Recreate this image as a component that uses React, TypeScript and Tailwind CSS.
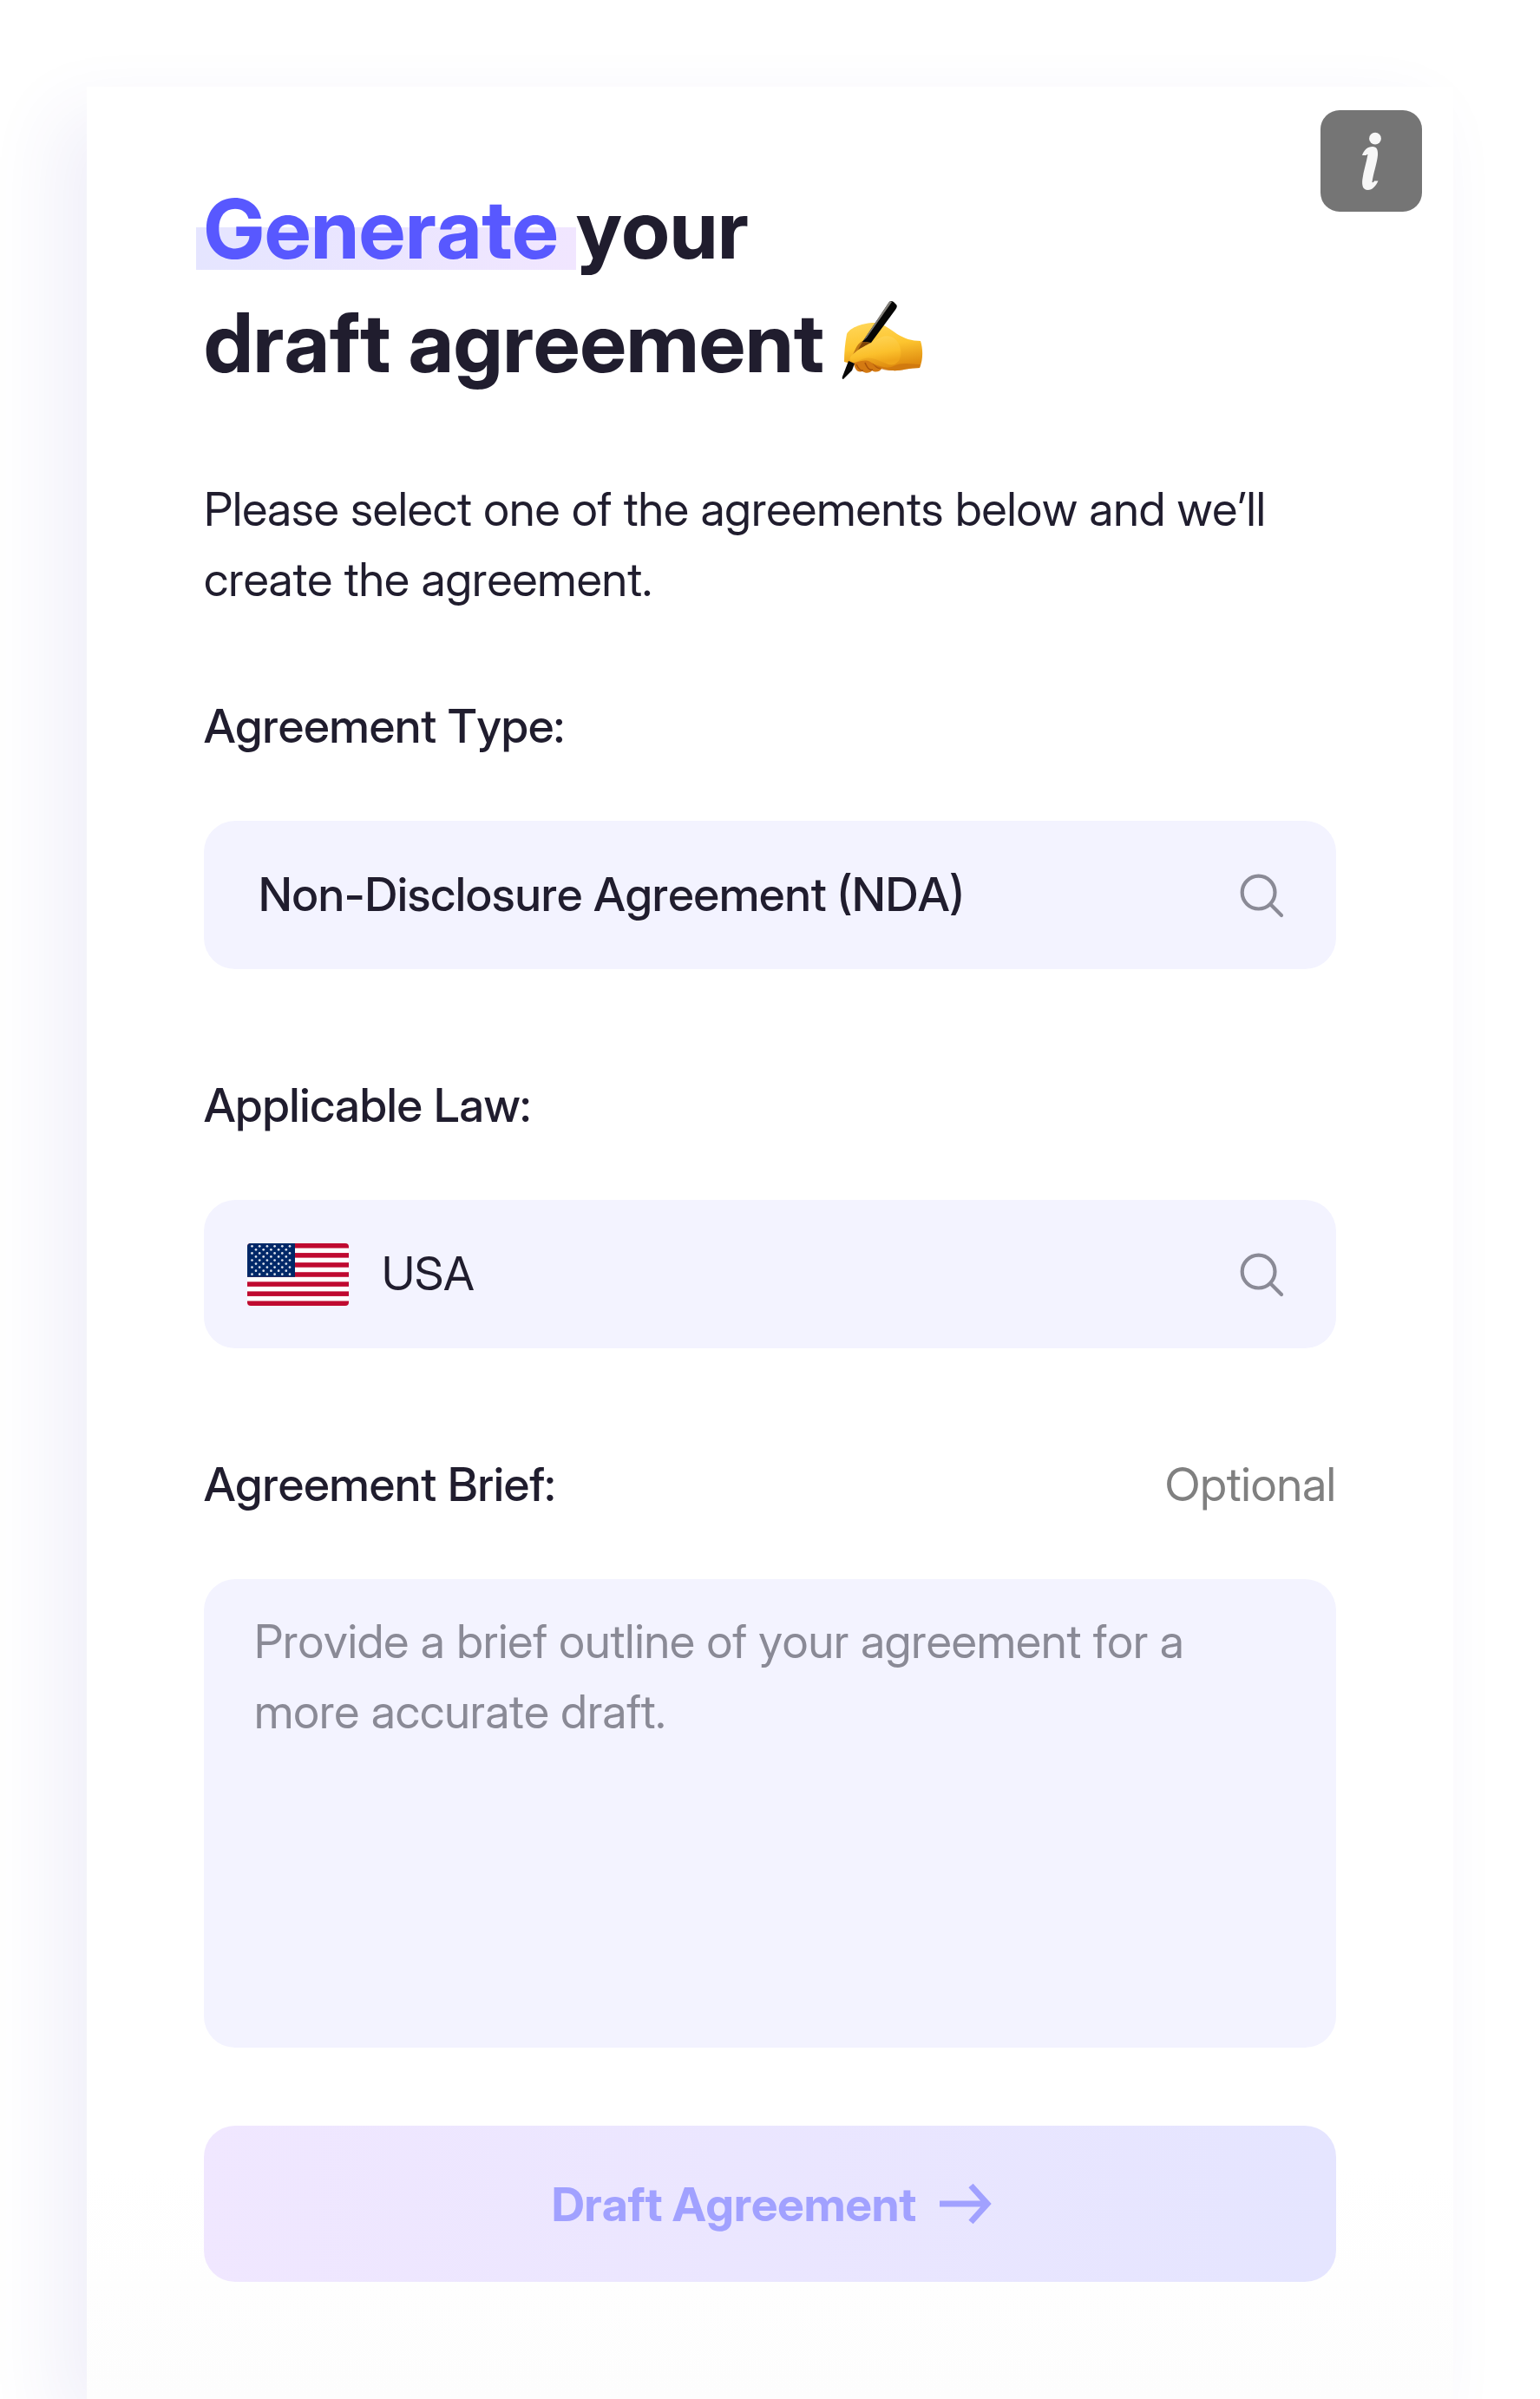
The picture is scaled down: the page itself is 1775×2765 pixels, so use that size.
import React from "react";

const STRIPES = [0, 2, 4, 6, 8, 10, 12];
const STAR_ROWS = [0, 1, 2, 3, 4, 5, 6, 7, 8];

function SearchIcon() {
  return (
    <svg viewBox="0 0 54 54" className="size-[54px] shrink-0" fill="none" stroke="#8a8a96" strokeWidth="4.2" aria-hidden="true">
      <circle cx="24.6" cy="23.6" r="18.9" />
      <path d="M38.3 37.3 L51 50" strokeLinecap="round" />
    </svg>
  );
}

function UsaFlag() {
  return (
    <svg viewBox="0 0 117 72" className="h-[72px] w-[117px] shrink-0 rounded-[4px]" aria-hidden="true">
      <rect width="117" height="72" fill="#fff" />
      {STRIPES.map((i) => (
        <rect key={i} x="0" y={(i * 72) / 13} width="117" height={72 / 13} fill="#bf0a30" />
      ))}
      <rect width="55" height="38.8" fill="#002868" />
      {STAR_ROWS.map((row) =>
        Array.from({ length: row % 2 ? 5 : 6 }, (_, col) => (
          <circle key={`${row}-${col}`} cx={(row % 2 ? 10 : 5.5) + col * 8.7} cy={3.3 + row * 4.05} r="1.35" fill="#dfe4ee" />
        ))
      )}
    </svg>
  );
}

function WritingHand() {
  return (
    <svg viewBox="0 0 94 91" className="inline-block h-[91px] w-[94px] align-[-8px]" role="img" aria-label="Writing hand">
      <defs>
        <linearGradient id="skin" x1="0" y1="0" x2="0.25" y2="1">
          <stop offset="0" stopColor="#ffd85c" />
          <stop offset="0.55" stopColor="#fdc52f" />
          <stop offset="1" stopColor="#e08d10" />
        </linearGradient>
        <linearGradient id="thumb" x1="0" y1="0" x2="0.3" y2="1">
          <stop offset="0" stopColor="#ffd95e" />
          <stop offset="0.7" stopColor="#fbc02c" />
          <stop offset="1" stopColor="#efa51a" />
        </linearGradient>
      </defs>
      <path d="M14 70 C14 80 19 84 24 82 C28 85 33 84 35 81 C39 84 45 82 46 79 L50 72 L30 58 Z" fill="#d47a12" />
      <path d="M17 74 Q21 82 25 81 M27 72 Q31 82 36 80 M35 70 Q40 80 46 78" stroke="#a9540a" strokeWidth="1.6" fill="none" />
      <path d="M3 71 C3 60 4 50 6 39 C10 31 26 26 37 26 C47 26 55 33 64 39 C72 44 81 47 91 47 C94 56 94 69 90 78 C77 78 67 82 58 81 C48 80 40 76 33 71 C26 67 18 72 10 73 Z" fill="url(#skin)" />
      <path d="M34 73 C46 76 51 80 60 76 C70 71 80 74 91 74 L90 78 C77 78 67 82 58 81 C50 81 44 80 34 73 Z" fill="#c9700f" opacity=".65" />
      <path d="M27 46 C18 48 16 57 12 65 L17 66 C21 61 27 57 30 52 Z" fill="#a65a0c" opacity=".7" />
      <path d="M10 66 C15 58 33 49 45 43 C56 38 66 45 68 57 C70 70 62 76 54 74 C43 70 36 65 27 67 C21 68 17 73 12 71 C10 70 9 68 10 66 Z" fill="url(#thumb)" />
      <path d="M55 2 Q57 0 60 2 L63 5 Q65 7 62 11 L34 49 L24 48 Z" fill="#060606" />
      <path d="M54 3 Q56 0 58 2 L29 43 L25 47 Z" fill="#85827c" />
      <path d="M24 48 L34 49 C28 52 22 55 19 57 Z" fill="#7c4308" />
      <path d="M8 70 L15 73 L12 81 L2 91 Q0 91 1 88 Z" fill="#080808" />
    </svg>
  );
}

function InfoGlyph() {
  return (
    <svg viewBox="0 0 117 117" className="size-full" fill="#f7f7f7" aria-hidden="true">
      <circle cx="63" cy="32.7" r="6.9" />
      <path d="M48 52 C50 46 54 42 60 42 C65 42 66.5 46 66 52 C65 62 61 72 59.5 83 Q61 84 62 81.5 H66.5 C64 87 60 92 54.5 92 C49 92 47.5 87 48.3 80 C49.5 70 53 60 54.5 51 Q53.5 50.5 52.5 52 Z" />
    </svg>
  );
}

export default function App() {
  const field = "flex h-[171px] items-center rounded-[36px] bg-[#f3f3ff] pr-[60px]";
  const input = "min-w-0 flex-1 bg-transparent pb-[2px] text-[54px] leading-[81px] outline-none";
  const label = "text-[54px] leading-[81px] font-medium";
  return (
    <div className="overflow-hidden bg-white px-[100px] pt-[100px] font-['Inter_Display','Inter',sans-serif] text-[#201d2e] [font-kerning:none]">
      <main className="relative bg-gradient-to-b from-white from-90% to-[#fdfdfd] px-[135px] pt-[98px] pb-[135px] shadow-[-32px_32px_80px_rgba(60,50,180,0.08)]">
        <button type="button" aria-label="Information" className="absolute top-[27px] right-[36px] size-[117px] rounded-[22px] bg-[#757575]">
          <InfoGlyph />
        </button>

        <h1 className="text-[95px] leading-[131px] font-bold">
          <span className="relative isolate inline-block whitespace-pre text-[#5858ff] before:absolute before:top-[64px] before:right-0 before:-left-[9px] before:-z-10 before:h-[49px] before:bg-gradient-to-r before:from-[#e5e5ff] before:to-[#f1e6ff]">
            {"Generate "}
          </span>
          your
          <br />
          draft agreement <WritingHand />
        </h1>

        <p className="mt-[86px] text-[54px] leading-[81px]">
          Please select one of the agreements below and we’ll create the agreement.
        </p>

        <form className="mt-[88px]" onSubmit={(e) => e.preventDefault()}>
          <label htmlFor="type" className={`block ${label}`}>Agreement Type:</label>
          <div className={`mt-[69px] ${field} pl-[63px]`}>
            <input id="type" type="text" defaultValue="Non-Disclosure Agreement (NDA)" className={`${input} font-medium`} />
            <SearchIcon />
          </div>

          <label htmlFor="law" className={`mt-[116px] block ${label}`}>Applicable Law:</label>
          <div className={`mt-[69px] ${field} gap-[38px] pl-[50px]`}>
            <UsaFlag />
            <input id="law" type="text" defaultValue="USA" className={input} />
            <SearchIcon />
          </div>

          <div className="mt-[116px] flex items-center justify-between">
            <label htmlFor="brief" className={label}>Agreement Brief:</label>
            <span className="text-[54px] leading-[81px] text-[#808080]">Optional</span>
          </div>
          <textarea
            id="brief"
            placeholder="Provide a brief outline of your agreement for a more accurate draft."
            className="mt-[69px] block h-[540px] w-full resize-none rounded-[36px] bg-[#f3f3ff] px-[58px] py-[31px] text-[54px] leading-[81px] outline-none placeholder:text-[#8a8a96]"
          />

          <button type="submit" className="mt-[90px] flex h-[180px] w-full items-center justify-center gap-[27px] rounded-[36px] bg-gradient-to-r from-[#f0e7ff] to-[#e5e5ff] pl-1 text-[54px] leading-[81px] font-bold text-[#a1a1ff]">
            Draft Agreement
            <svg viewBox="0 0 60 48" className="h-[48px] w-[60px]" fill="none" stroke="currentColor" strokeWidth="7" aria-hidden="true">
              <path d="M0 24 H54 M36 3 L55 24 L36 45" />
            </svg>
          </button>
        </form>
      </main>
    </div>
  );
}
